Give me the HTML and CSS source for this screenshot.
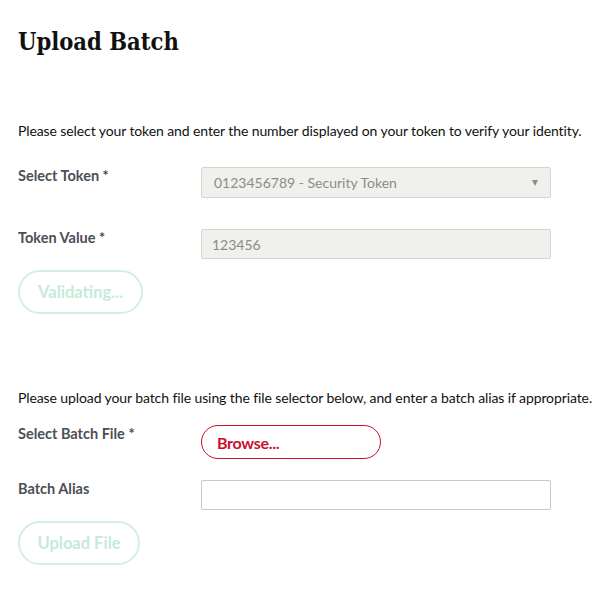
FILE: index.html
```html
<!DOCTYPE html>
<html>
<head>
<meta charset="utf-8">
<link rel="stylesheet" href="styles.css">
</head>
<body>
<div class="page">
  <h1 class="title">Upload Batch</h1>

  <section class="block block-token">
    <p class="intro">Please select your token and enter the number displayed on your token to verify your identity.</p>
    <div class="row row-select">
      <label class="label">Select Token *</label>
      <div class="select">
        <span class="select-value">0123456789 - Security Token</span>
        <span class="caret"></span>
      </div>
    </div>
    <div class="row row-value">
      <label class="label">Token Value *</label>
      <div class="input input-disabled">123456</div>
    </div>
    <button class="btn btn-disabled btn-validate">Validating...</button>
  </section>

  <section class="block block-upload">
    <p class="intro">Please upload your batch file using the file selector below, and enter a batch alias if appropriate.</p>
    <div class="row row-file">
      <label class="label">Select Batch File *</label>
      <button class="btn btn-browse">Browse...</button>
    </div>
    <div class="row row-alias">
      <label class="label">Batch Alias</label>
      <div class="input input-empty"></div>
    </div>
    <button class="btn btn-disabled btn-upload">Upload File</button>
  </section>
</div>
</body>
</html>
```
FILE: styles.css
```css
html, body {
  margin: 0;
  padding: 0;
  background: #ffffff;
}
body {
  font-family: Lato, "Liberation Sans", sans-serif;
  color: #111;
}
.page {
  padding: 0 18px;
}
.title {
  margin: 0;
  padding-top: 27px;
  font-family: "DejaVu Serif Condensed", "DejaVu Serif", serif;
  font-weight: bold;
  font-size: 23.5px;
  line-height: 30px;
  color: #111;
}
.block-token {
  padding-top: 64px;
}
.block-upload {
  padding-top: 74px;
}
.intro {
  margin: 0;
  font-size: 14px;
  line-height: 20px;
  letter-spacing: -0.1px;
  color: #111;
  white-space: nowrap;
}
.row {
  display: grid;
  grid-template-columns: 183px 350px;
  align-items: start;
}
.label {
  font-size: 14.5px;
  font-weight: bold;
  color: #4b4f56;
  line-height: 18px;
}
.row-select { margin-top: 26px; }
.row-value { margin-top: 31px; }
.row-file { margin-top: 17px; }
.row-alias { margin-top: 21px; }
.select, .input {
  box-sizing: border-box;
  height: 31px;
  border: 1px solid #d5d5d0;
  border-radius: 2px;
  font-size: 14px;
  color: #8c8c88;
  display: flex;
  align-items: center;
  padding: 0 12px;
}
.select {
  background: #f0f0ec;
  justify-content: space-between;
}
.input-disabled {
  background: #f0f0ec;
  padding-left: 10px;
  height: 30px;
}
.input-empty {
  background: #fff;
  border-color: #c8c8c8;
  height: 30px;
}
.caret {
  width: 0;
  height: 0;
  border-left: 3.5px solid transparent;
  border-right: 3.5px solid transparent;
  border-top: 6px solid #8a8a8a;
}
.btn {
  font-family: Lato, "Liberation Sans", sans-serif;
  font-weight: bold;
  font-size: 16px;
  background: #fff;
  border-radius: 22px;
  box-sizing: border-box;
  display: flex;
  align-items: center;
  white-space: nowrap;
  padding: 0 18px;
}
.btn-disabled {
  border: 2px solid #d2efe2;
  color: #c6ead8;
  height: 44px;
  justify-content: center;
  padding: 0;
  font-size: 16.5px;
}
.btn-validate {
  margin-top: 11px;
  width: 125px;
}
.btn-upload {
  margin-top: 11px;
  width: 122px;
}
.btn-browse {
  border: 1px solid #c8102e;
  color: #c8102e;
  height: 34px;
  width: 180px;
  padding: 0 15px;
  letter-spacing: -0.3px;
}
```
